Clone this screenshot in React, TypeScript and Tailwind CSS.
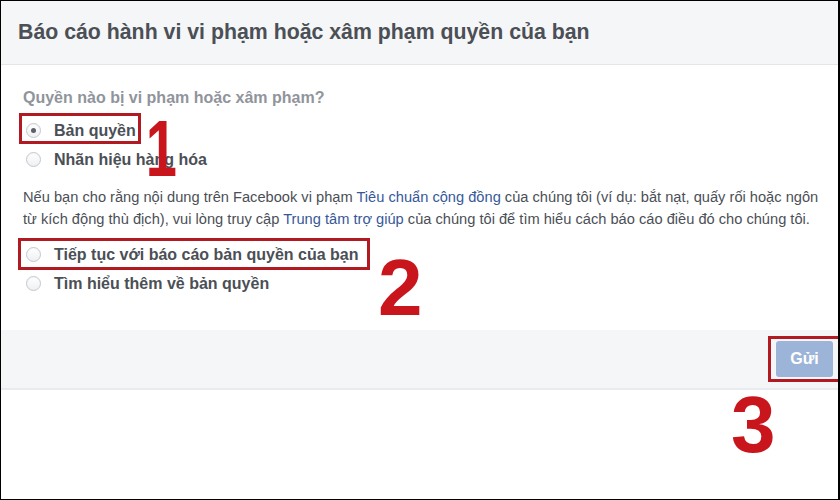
import React from 'react';

function Radio({ checked = false }: { checked?: boolean }) {
  return (
    <span className="ml-[3px] flex h-[15px] w-[15px] shrink-0 items-center justify-center rounded-full border border-[#c3c7cd] bg-gradient-to-b from-white to-[#eef0f2] shadow-[inset_0_1px_1px_rgba(0,0,0,0.04)]">
      {checked && <span className="h-[5px] w-[5px] rounded-full bg-[#5c6068]" />}
    </span>
  );
}

function Option({ label, checked, children }: { label: string; checked?: boolean; children?: React.ReactNode }) {
  return (
    <div className="relative flex h-[29px] items-center">
      <div className="relative flex items-center gap-[13px]">
        <Radio checked={checked} />
        <span className="whitespace-nowrap text-[16px] font-bold leading-[20px] text-[#4b4f56]">{label}</span>
        {children}
      </div>
    </div>
  );
}

const Mark = ({ className }: { className: string }) => (
  <span className={`pointer-events-none absolute border-[3px] border-[#b01a20] ${className}`} />
);

export default function App() {
  return (
    <div className="relative flex h-[500px] w-[840px] flex-col overflow-hidden border border-r-2 border-black bg-white font-['Liberation_Sans',Arial,sans-serif]">
      <div className="flex h-[64px] shrink-0 items-center border-b border-[#e5e5e5] bg-[#f5f6f7] px-[17px]">
        <h1 className="whitespace-nowrap text-[21.3px] font-bold text-[#4b4f56]">Báo cáo hành vi vi phạm hoặc xâm phạm quyền của bạn</h1>
      </div>

      <div className="h-[265px] shrink-0 px-[22px] pt-[23px]">
        <p className="text-[16px] font-bold leading-[20px] text-[#90949c]">Quyền nào bị vi phạm hoặc xâm phạm?</p>

        <div className="mt-[8px]">
          <Option label="Bản quyền" checked>
            <Mark className="-left-[4px] -right-[5px] -top-[8px] -bottom-[3px]" />
          </Option>
          <Option label="Nhãn hiệu hàng hóa" />
        </div>

        <p className="mt-[12px] whitespace-nowrap text-[14.65px] leading-[22px] text-[#4b4f56]">
          Nếu bạn cho rằng nội dung trên Facebook vi phạm <span className="text-[#365899]">Tiêu chuẩn cộng đồng</span> của chúng tôi (ví dụ: bắt nạt, quấy rối hoặc ngôn
          <br />
          từ kích động thù địch), vui lòng truy cập <span className="text-[#365899]">Trung tâm trợ giúp</span> của chúng tôi để tìm hiểu cách báo cáo điều đó cho chúng tôi.
        </p>

        <div className="mt-[10px]">
          <Option label="Tiếp tục với báo cáo bản quyền của bạn">
            <Mark className="-left-[5px] -right-[12px] -top-[7px] -bottom-[5px]" />
          </Option>
          <Option label="Tìm hiểu thêm về bản quyền" />
        </div>
      </div>

      <div className="flex h-[60px] shrink-0 items-center justify-end border-b-2 border-[#e9ebee] bg-[#f5f6f7] pr-[5px]">
        <div className="relative">
          <button className="h-[36px] w-[57px] rounded-[3px] bg-[#9cb4d8] text-[16px] font-bold text-white">Gửi</button>
          <Mark className="-left-[8px] -right-[8px] -top-[5px] -bottom-[5px]" />
        </div>
      </div>

      <span className="pointer-events-none absolute left-[138px] top-[108px] origin-center scale-x-[0.7] text-[80px] font-bold leading-none text-[#c9161d]">1</span>
      <span className="pointer-events-none absolute left-[377px] top-[247px] text-[80px] font-bold leading-none text-[#c9161d]">2</span>
      <span className="pointer-events-none absolute left-[730px] top-[384px] text-[80px] font-bold leading-none text-[#c9161d]">3</span>
    </div>
  );
}
